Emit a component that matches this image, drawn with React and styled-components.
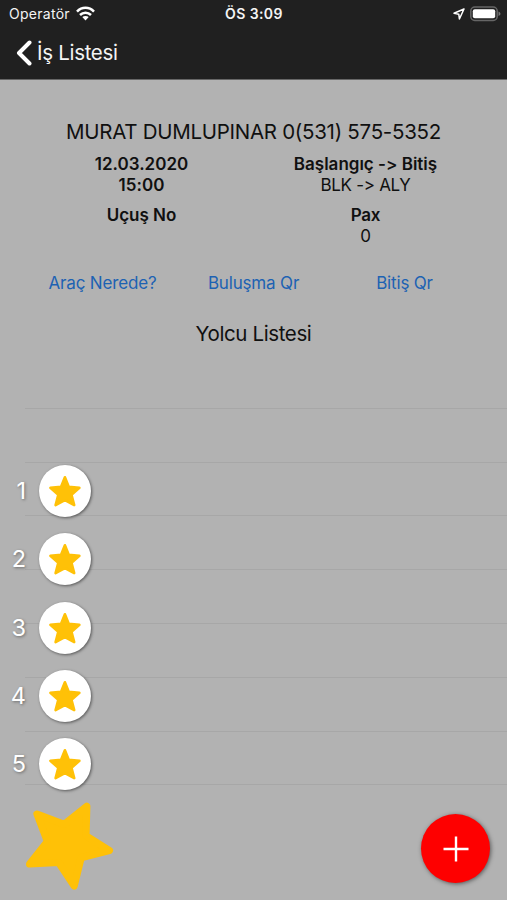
import React from "react";
import styled, { createGlobalStyle } from "styled-components";

const GlobalStyle = createGlobalStyle`
  * { box-sizing: border-box; }
  body { margin: 0; background: #b2b2b2; }
`;

const Screen = styled.div`
  position: relative;
  display: flex;
  flex-direction: column;
  width: 507px;
  height: 900px;
  overflow: hidden;
  background: #b2b2b2;
  color: #101010;
  font-family: Inter, "Liberation Sans", sans-serif;
  font-feature-settings: "calt" 0;
`;

const Header = styled.header`
  height: 80px;
  flex: none;
  background: #202020;
  border-bottom: 1px solid #666;
  color: #f4f4f4;
`;

const StatusBar = styled.div`
  display: grid;
  grid-template-columns: 1fr auto 1fr;
  align-items: center;
  height: 27px;
  padding: 0 6px 0 9px;
`;

const StatusSide = styled.div`
  display: flex;
  align-items: center;
  justify-content: ${(p) => (p.$end ? "flex-end" : "flex-start")};
  gap: ${(p) => (p.$end ? 5 : 6)}px;
`;

const Label = styled.span`
  display: block;
  white-space: nowrap;
  font-size: ${(p) => p.$size}px;
  line-height: ${(p) => p.$line || 21}px;
  font-weight: ${(p) => p.$weight || 400};
  letter-spacing: ${(p) => p.$track || 0}px;
`;

const Clock = styled(Label)`
  margin-right: 2px;
`;

const BackButton = styled.button`
  display: flex;
  align-items: center;
  gap: 5px;
  height: 51px;
  padding: 0 0 0 16px;
  border: 0;
  background: none;
  color: #f4f4f4;
  font-family: inherit;
  font-feature-settings: inherit;
`;

const Title = styled.h1`
  margin: 39px 0 0;
  font-weight: 400;
  text-align: center;
`;

const Details = styled.div`
  display: grid;
  grid-template-columns: 224px 224px;
  justify-content: center;
  row-gap: 9px;
  margin-top: 9px;
  text-align: center;
`;

const Links = styled.nav`
  display: grid;
  grid-template-columns: 151px 151px 151px;
  justify-content: center;
  margin-top: 26px;
`;

const LinkButton = styled.button`
  display: flex;
  justify-content: center;
  padding: 0;
  border: 0;
  background: none;
  color: #1d62b3;
  font-family: inherit;
`;

const SectionTitle = styled.h2`
  margin: 27px 0 0;
  text-align: center;
`;

const List = styled.div`
  display: flex;
  flex-direction: column;
  margin: 8px 0 0 25px;
`;

const ListRow = styled.div`
  height: 53.8px;
  border-bottom: 1px solid #a7a7a7;
`;

const Ratings = styled.div`
  position: absolute;
  left: 0;
  top: 464.8px;
  display: flex;
  flex-direction: column;
  gap: 16.4px;
`;

const RatingRow = styled.div`
  display: flex;
  align-items: center;
  gap: 12.7px;
  height: 52px;
`;

const RatingNumber = styled.span`
  width: 26px;
  color: #fff;
  font-size: 23.5px;
  line-height: 30px;
  text-align: right;
  text-shadow: 1px 1px 3px rgba(0, 0, 0, 0.4);
`;

const RatingButton = styled.button`
  display: flex;
  align-items: center;
  justify-content: center;
  width: 52px;
  height: 52px;
  padding: 0;
  border: 0;
  border-radius: 50%;
  background: #fff;
  box-shadow: 1px 1px 3px rgba(0, 0, 0, 0.5);
`;

const BigStarButton = styled.button`
  position: absolute;
  left: 20px;
  top: 798px;
  width: 98px;
  height: 96px;
  padding: 0;
  border: 0;
  background: none;
`;

const AddButton = styled.button`
  position: absolute;
  left: 421px;
  top: 814px;
  display: flex;
  align-items: center;
  justify-content: center;
  width: 69px;
  height: 69px;
  padding: 0;
  border: 0;
  border-radius: 50%;
  background: #fe0000;
  box-shadow: 1px 1px 4px rgba(0, 0, 0, 0.5);
`;

const Icon = styled.svg`
  display: block;
  flex: none;
`;

const WifiIcon = () => (
  <Icon width="19" height="15" viewBox="0 0 19 15" fill="none" stroke="#fff" strokeWidth="2.5">
    <path d="M1 5.6C5.8.6 13.2.6 18 5.6" />
    <path d="M4 9c3.1-3.1 7.9-3.1 11 0" />
    <path d="M6.3 11.1c1.7-1.6 4.7-1.6 6.4 0L9.5 14.4Z" fill="#fff" stroke="none" />
  </Icon>
);

const LocationIcon = () => (
  <Icon width="12" height="12" viewBox="0 0 12 12" fill="none" stroke="#fff" strokeWidth="1.5" strokeLinejoin="round">
    <path d="M11 1 1 5.3l4.8.9.6 4.8Z" />
  </Icon>
);

const BatteryIcon = () => (
  <Icon width="31" height="16" viewBox="0 0 31 16">
    <rect x=".8" y="1" width="26.4" height="13.4" rx="4" fill="none" stroke="#666" strokeWidth="1.5" />
    <rect x="2.8" y="3.2" width="22.4" height="9" rx="2" fill="#fff" />
    <path d="M28.5 5.5c2.6 1.2 2.6 3.4 0 4.6Z" fill="#777" />
  </Icon>
);

const SmallStar = () => (
  <Icon width="34" height="34" viewBox="0 0 34 34" fill="#ffc107" stroke="#ffc107" strokeWidth="2.6" strokeLinejoin="round">
    <path d="M16.9 3.3 20.7 12.8 31.4 13.8 23.5 20.8 26.2 31.1 16.9 26.2 7.6 31.1 10.3 20.8 2.4 13.8 13.1 12.8Z" />
  </Icon>
);

const BigStar = () => (
  <Icon width="98" height="96" viewBox="20 798 98 96" fill="#ffc107" stroke="#ffc107" strokeWidth="7.2" strokeLinejoin="round">
    <path d="M86.8 806.2 86 835.7 109.4 850.6 81.1 857.8 74.2 886 58.6 862.5 29.6 864 47.4 841.5 37 814 64.2 824.4Z" />
  </Icon>
);

export default function App() {
  return (
    <Screen>
      <GlobalStyle />
      <Header>
        <StatusBar>
          <StatusSide>
            <Label $size={14} $track={0.28}>Operatör</Label>
            <WifiIcon />
          </StatusSide>
          <Clock $size={14} $weight={600} $track={0.4}>ÖS 3:09</Clock>
          <StatusSide $end>
            <LocationIcon />
            <BatteryIcon />
          </StatusSide>
        </StatusBar>
        <BackButton>
          <Icon width="16" height="26" viewBox="0 0 16 26" fill="none" stroke="#fff" strokeWidth="4" strokeLinecap="round" strokeLinejoin="round">
            <path d="M13.5 2.5 3 13l10.5 10.5" />
          </Icon>
          <Label $size={20.5} $line={26} $track={-0.3}>İş Listesi</Label>
        </BackButton>
      </Header>
      <Title><Label $size={20.5} $line={26} $track={-0.28}>MURAT DUMLUPINAR 0(531) 575-5352</Label></Title>
      <Details>
        <div>
          <Label $size={17} $weight={600}>12.03.2020</Label>
          <Label $size={17} $weight={600} $track={0.1}>15:00</Label>
        </div>
        <div>
          <Label $size={17} $weight={600}>Başlangıç -&gt; Bitiş</Label>
          <Label $size={17} $track={-0.3}>BLK -&gt; ALY</Label>
        </div>
        <Label $size={17} $weight={600}>Uçuş No</Label>
        <div>
          <Label $size={17} $weight={600} $track={-0.2}>Pax</Label>
          <Label $size={17}>0</Label>
        </div>
      </Details>
      <Links>
        {["Araç Nerede?", "Buluşma Qr", "Bitiş Qr"].map((name) => (
          <LinkButton key={name}><Label $size={17} $track={-0.17}>{name}</Label></LinkButton>
        ))}
      </Links>
      <SectionTitle><Label $size={20.5} $line={26} $track={-0.38}>Yolcu Listesi</Label></SectionTitle>
      <List>
        {Array.from({ length: 8 }, (_, i) => <ListRow key={i} />)}
      </List>
      <Ratings>
        {[1, 2, 3, 4, 5].map((n) => (
          <RatingRow key={n}>
            <RatingNumber>{n}</RatingNumber>
            <RatingButton aria-label={`${n}`}><SmallStar /></RatingButton>
          </RatingRow>
        ))}
      </Ratings>
      <BigStarButton><BigStar /></BigStarButton>
      <AddButton>
        <Icon width="26" height="26" viewBox="0 0 26 26" stroke="#fff" strokeWidth="2.4">
          <path d="M13 .5v25M.5 13h25" />
        </Icon>
      </AddButton>
    </Screen>
  );
}
